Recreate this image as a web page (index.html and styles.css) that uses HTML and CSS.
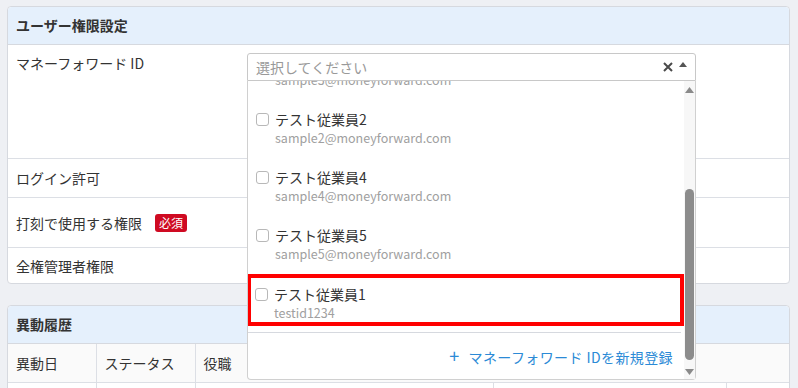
FILE: index.html
```html
<!DOCTYPE html>
<html lang="ja">
<head>
    <meta charset="UTF-8">
    <meta name="viewport" content="width=device-width, initial-scale=1.0">
    <title>ユーザー権限設定</title>
    <link rel="stylesheet" href="styles.css">
</head>
<body>
    <div class="page">
        <section class="card">
            <h2 class="card-title">ユーザー権限設定</h2>

            <div class="field-row row-id">
                <div class="field-label">マネーフォワード ID</div>
                <div class="field-body">
                    <div class="select-wrap">
                        <div class="select">
                            <span class="placeholder">選択してください</span>
                            <span class="select-icons">
                                <svg width="10" height="10" viewBox="0 0 10 10"><path d="M1 1 L9 9 M9 1 L1 9" stroke="#4a4a4a" stroke-width="2" fill="none"/></svg>
                                <svg width="8" height="5" viewBox="0 0 8 5"><polygon points="4,0 8,5 0,5" fill="#555"/></svg>
                            </span>
                        </div>

                        <div class="dropdown">
                            <div class="dropdown-main">
                                <div class="options">
                                    <ul class="option-list">
                                        <li class="option">
                                            <span class="checkbox"></span>
                                            <div class="option-text">
                                                <div class="option-name">テスト従業員3</div>
                                                <div class="option-sub">sample3@moneyforward.com</div>
                                            </div>
                                        </li>
                                        <li class="option">
                                            <span class="checkbox"></span>
                                            <div class="option-text">
                                                <div class="option-name">テスト従業員2</div>
                                                <div class="option-sub">sample2@moneyforward.com</div>
                                            </div>
                                        </li>
                                        <li class="option">
                                            <span class="checkbox"></span>
                                            <div class="option-text">
                                                <div class="option-name">テスト従業員4</div>
                                                <div class="option-sub">sample4@moneyforward.com</div>
                                            </div>
                                        </li>
                                        <li class="option">
                                            <span class="checkbox"></span>
                                            <div class="option-text">
                                                <div class="option-name">テスト従業員5</div>
                                                <div class="option-sub">sample5@moneyforward.com</div>
                                            </div>
                                        </li>
                                        <li class="option highlighted">
                                            <span class="checkbox"></span>
                                            <div class="option-text">
                                                <div class="option-name">テスト従業員1</div>
                                                <div class="option-sub">testid1234</div>
                                            </div>
                                        </li>
                                    </ul>
                                </div>
                                <div class="dropdown-footer">
                                    <a href="#" class="add-link"><span class="plus">+</span>マネーフォワード IDを新規登録</a>
                                </div>
                            </div>
                            <div class="scrollbar">
                                <svg class="scroll-arrow up" width="9" height="6" viewBox="0 0 9 6"><polygon points="4.5,0 9,6 0,6" fill="#8a8a8a"/></svg>
                                <div class="scroll-thumb"></div>
                                <svg class="scroll-arrow down" width="9" height="6" viewBox="0 0 9 6"><polygon points="0,0 9,0 4.5,6" fill="#8a8a8a"/></svg>
                            </div>
                        </div>
                    </div>
                </div>
            </div>

            <div class="field-row row-login">
                <div class="field-label">ログイン許可</div>
                <div class="field-body"></div>
            </div>

            <div class="field-row row-stamp">
                <div class="field-label">打刻で使用する権限<span class="badge">必須</span></div>
                <div class="field-body"></div>
            </div>

            <div class="field-row row-admin">
                <div class="field-label">全権管理者権限</div>
                <div class="field-body"></div>
            </div>
        </section>

        <section class="card history">
            <h2 class="card-title">異動履歴</h2>
            <table class="history-table">
                <thead>
                    <tr>
                        <th class="col-date">異動日</th>
                        <th class="col-status">ステータス</th>
                        <th class="col-role">役職</th>
                        <th colspan="2"></th>
                    </tr>
                </thead>
                <tbody>
                    <tr>
                        <td></td>
                        <td></td>
                        <td></td>
                        <td class="col-dept"></td>
                        <td></td>
                    </tr>
                </tbody>
            </table>
        </section>
    </div>
</body>
</html>
```

FILE: styles.css
```css
* {
    margin: 0;
    padding: 0;
    box-sizing: border-box;
}

body {
    font-family: "Noto Sans CJK JP", "Noto Sans", sans-serif;
    font-size: 14px;
    color: #333;
    background: #eef0f4;
}

.page {
    padding: 6px 8px 0 7px;
}

.card {
    background: white;
    border: 1px solid #d6d9df;
    border-radius: 4px;
}

.card-title {
    height: 38px;
    padding: 0 8px;
    background: #e5f0fc;
    border-bottom: 1px solid #d6d9df;
    border-radius: 4px 4px 0 0;
    font-size: 14px;
    font-weight: bold;
    line-height: 37px;
}

.field-row {
    display: grid;
    grid-template-columns: 239px 1fr;
    align-items: center;
    border-bottom: 1px solid #dcdfe5;
}

.field-row:last-child {
    border-bottom: none;
}

.field-label {
    padding-left: 8px;
    line-height: 20px;
    display: flex;
    align-items: center;
}

.row-id {
    height: 114px;
    align-items: start;
    padding-top: 8px;
}

.row-login {
    height: 39px;
}

.row-stamp {
    height: 50px;
}

.row-admin {
    height: 35px;
}

.badge {
    margin-left: 13px;
    padding: 0 4px;
    height: 18px;
    line-height: 18px;
    background: #cf0a22;
    color: white;
    font-size: 12px;
    border-radius: 3px;
}

/* セレクト */
.select-wrap {
    position: relative;
    width: 449px;
}

.select {
    height: 28px;
    padding: 0 8px;
    border: 1px solid #c8c8c8;
    border-radius: 3px 3px 0 0;
    display: flex;
    align-items: center;
    justify-content: space-between;
}

.placeholder {
    color: #999;
    font-size: 14px;
}

.select-icons {
    display: flex;
    align-items: center;
    gap: 6px;
    margin-top: -1px;
}

.select-icons svg:last-child {
    margin-top: -4px;
}

.dropdown {
    position: absolute;
    top: 100%;
    left: 0;
    right: 0;
    height: 299px;
    background: white;
    border: 1px solid #d0d0d0;
    border-top: none;
    border-radius: 0 0 4px 4px;
    display: flex;
    z-index: 10;
}

.dropdown-main {
    flex: 1;
    display: flex;
    flex-direction: column;
    min-width: 0;
}

.options {
    height: 251px;
    overflow: hidden;
}

.option-list {
    list-style: none;
    margin-top: -40px;
}

.option {
    display: flex;
    align-items: flex-start;
    gap: 6px;
    height: 52px;
    margin-bottom: 6px;
    padding: 10px 8px 0;
}

.option.highlighted {
    margin-top: 7px;
    border: 4px solid #f00;
    padding: 6px 4px 0;
    margin-left: -1px;
}

.checkbox {
    width: 13px;
    height: 13px;
    margin-top: 4px;
    border: 1px solid #b8b8b8;
    border-radius: 3px;
    background: white;
    flex-shrink: 0;
}

.option-name {
    font-size: 14px;
    line-height: 20px;
    color: #333;
}

.option-sub {
    font-size: 12.5px;
    line-height: 17px;
    color: #a0a0a0;
}

.dropdown-footer {
    margin-right: 3px;
    border-top: 1px solid #d6d9df;
    padding: 12px 8px 0 0;
    text-align: right;
}

.add-link {
    color: #2b8ad6;
    text-decoration: none;
    line-height: 20px;
    letter-spacing: 0.4px;
}

.plus {
    font-size: 18px;
    margin-right: 9px;
}

.scrollbar {
    width: 11px;
    background: #f7f7f7;
    display: flex;
    flex-direction: column;
    align-items: center;
}

.scroll-arrow.up {
    margin-top: 6px;
}

.scroll-thumb {
    width: 9px;
    height: 171px;
    margin-top: 96px;
    background: #8c8c8c;
    border-radius: 5px;
}

.scroll-arrow.down {
    margin-top: 9px;
}

/* 異動履歴 */
.history {
    margin-top: 21px;
}

.history-table {
    width: 100%;
    border-collapse: collapse;
}

.history-table th {
    height: 38px;
    padding: 0 8px;
    background: #fafafa;
    font-weight: normal;
    text-align: left;
    border-bottom: 1px solid #dcdfe5;
}

.history-table th + th,
.history-table td + td {
    border-left: 1px solid #dcdfe5;
}

.history-table th:last-child {
    border-left: none;
}

.col-date {
    width: 88px;
}

.col-status {
    width: 99px;
}

.col-role {
    width: 298px;
}

.col-dept {
    width: 233px;
}

.history-table td {
    height: 38px;
}
```
